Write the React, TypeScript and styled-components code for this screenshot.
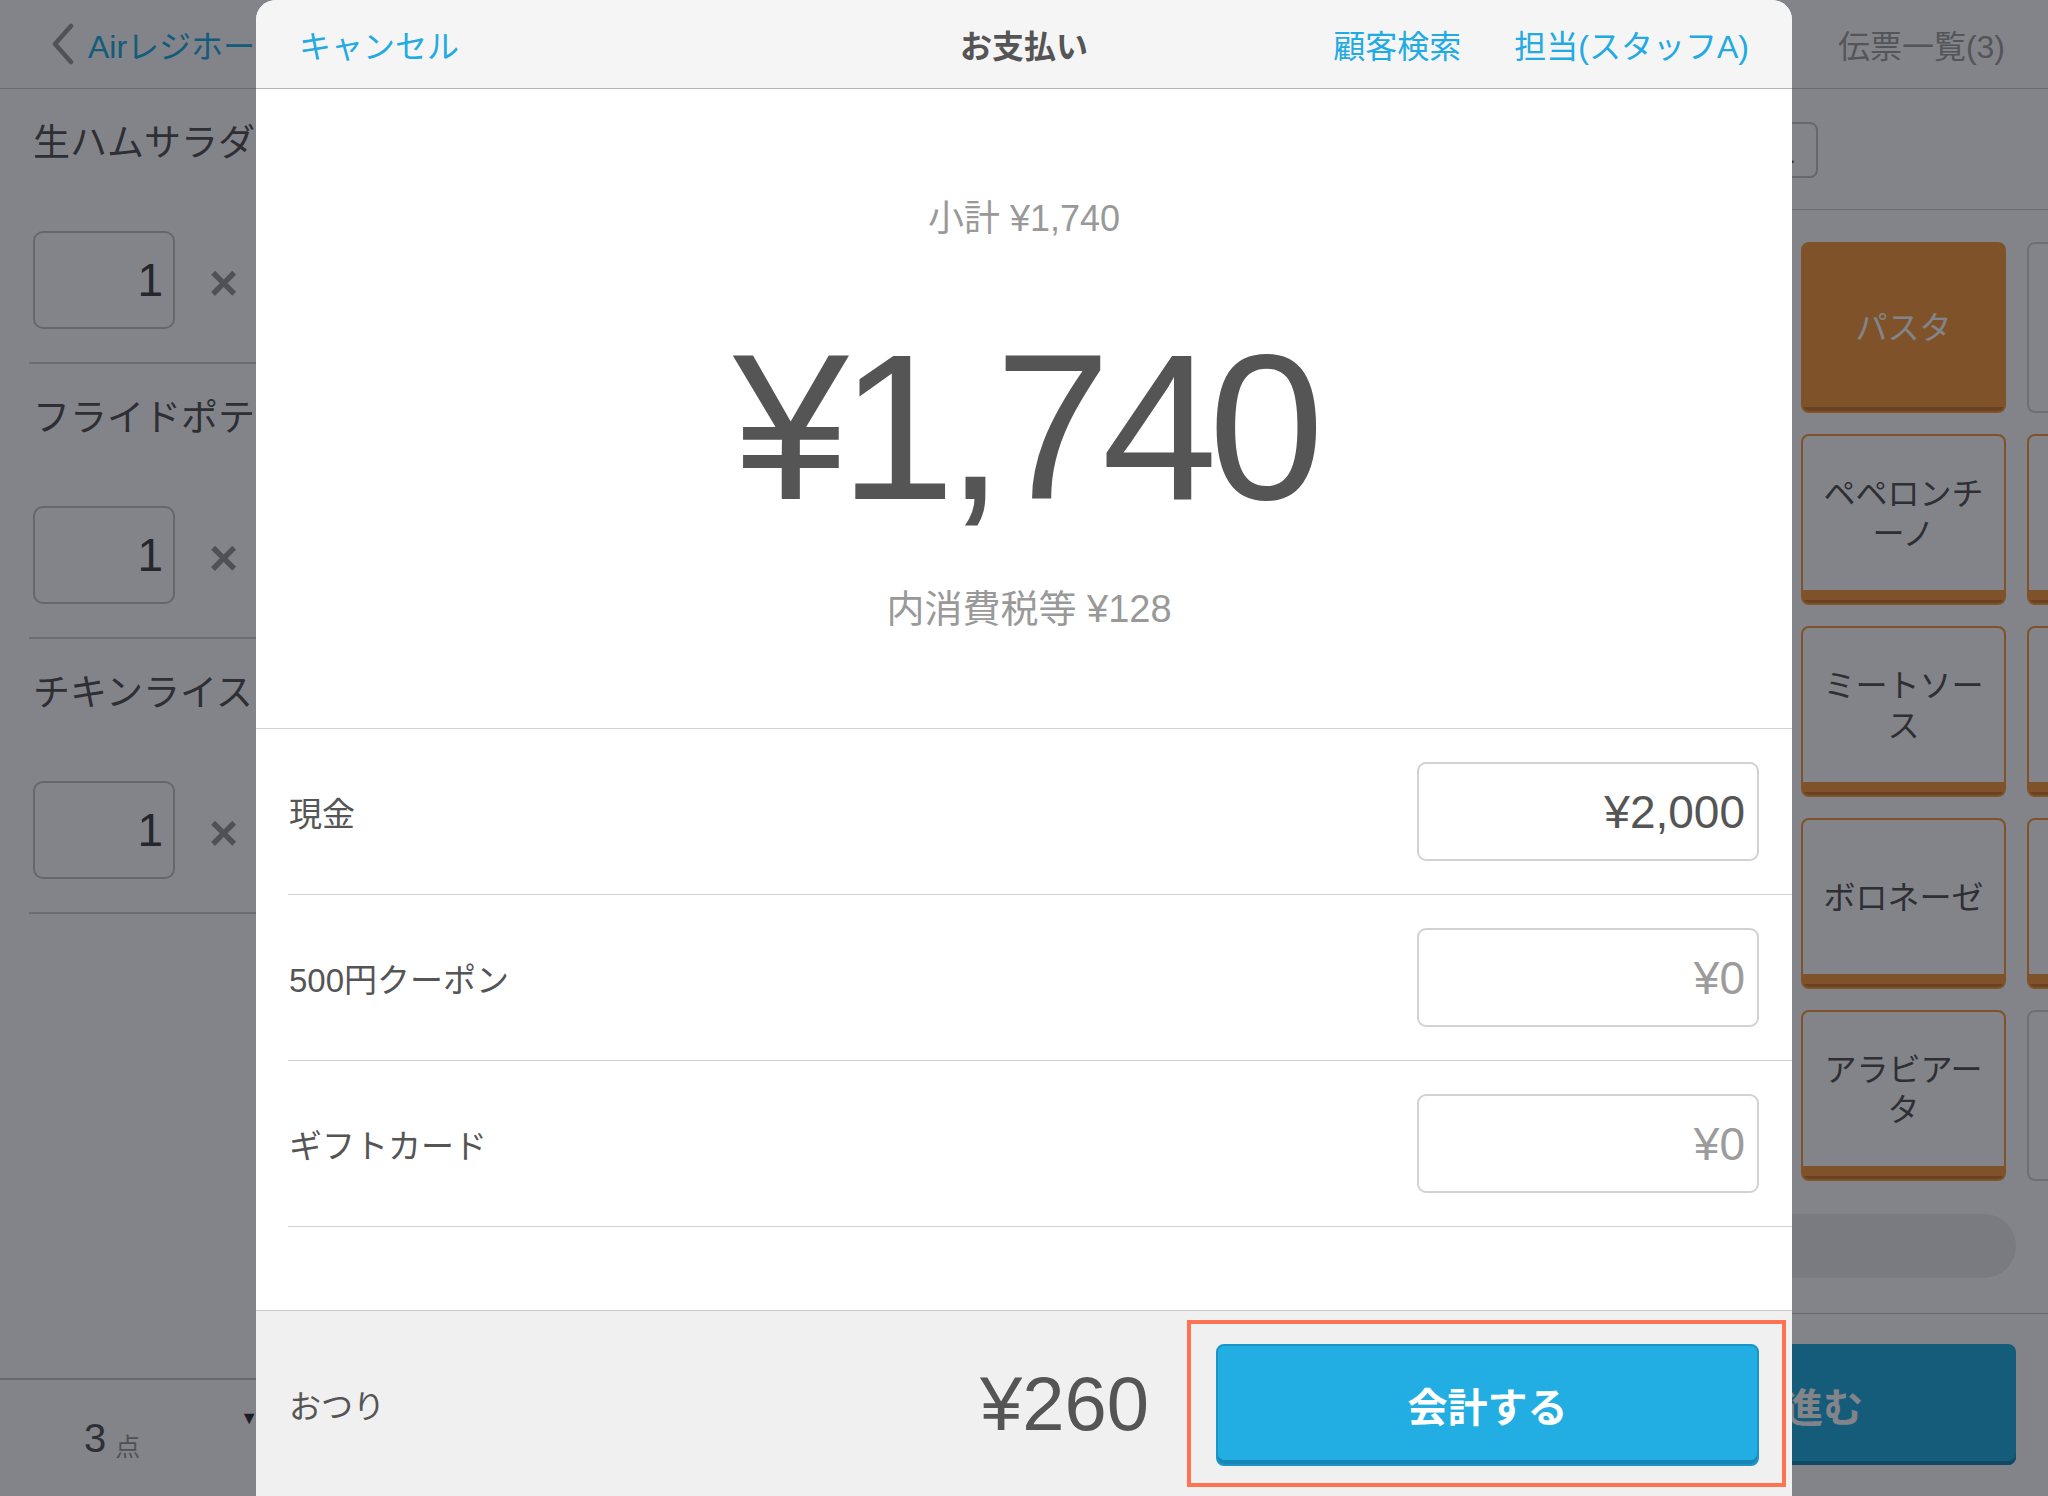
import React from "react";
import styled, { createGlobalStyle } from "styled-components";

const GlobalStyle = createGlobalStyle`
  html, body { margin: 0; padding: 0; }
  body {
    font-family: "Liberation Sans", "Noto Sans CJK JP", sans-serif;
    background: #fff;
  }
  *, *::before, *::after { box-sizing: border-box; }
`;

const BLUE = "#22aee2";
const ORANGE = "#f79b3f";

/* ---------- screen ---------- */
const Screen = styled.div`
  position: relative;
  width: 2048px;
  height: 1496px;
  overflow: hidden;
  background: #fff;
  display: flex;
  flex-direction: column;
`;

/* ---------- background app (behind the sheet) ---------- */
const AppHeader = styled.header`
  height: 89px;
  flex: none;
  display: flex;
  align-items: center;
  justify-content: space-between;
  padding: 0 43px 0 50px;
  border-bottom: 1px solid #c8c8c8;
`;

const BackLink = styled.div`
  display: flex;
  align-items: center;
  gap: 12px;
  color: ${BLUE};
  font-size: 32px;
`;

const SlipLink = styled.div`
  color: #a0a0a0;
  font-size: 32px;
`;

const AppBody = styled.div`
  flex: 1;
  display: flex;
  min-height: 0;
`;

const OrderPanel = styled.section`
  width: 880px;
  flex: none;
  display: flex;
  flex-direction: column;
  border-right: 1px solid #ccc;
`;

const OrderList = styled.div`
  flex: 1;
  padding-left: 29px;
`;

const OrderItem = styled.div`
  padding: 35px 0 33px 4px;
  border-bottom: 2px solid #d0d0d0;
`;

const ItemName = styled.div`
  font-size: 37px;
  line-height: 40px;
  color: #555;
  white-space: nowrap;
`;

const QtyRow = styled.div`
  margin-top: 67px;
  display: flex;
  align-items: center;
  gap: 34px;
`;

const QtyBox = styled.div`
  width: 142px;
  height: 98px;
  border: 2px solid #c4c4c4;
  border-radius: 10px;
  display: flex;
  align-items: center;
  justify-content: flex-end;
  padding-right: 10px;
  font-size: 46px;
  color: #444;
`;

const Times = styled.span`
  font-size: 50px;
  font-weight: 700;
  line-height: 1;
  color: #999;
  padding-top: 6px;
`;

const OrderFooter = styled.div`
  height: 118px;
  flex: none;
  border-top: 2px solid #c8c8c8;
  display: flex;
  align-items: center;
  padding-left: 84px;
`;

const CountNum = styled.span`
  font-size: 40px;
  color: #555;
`;

const CountUnit = styled.span`
  font-size: 25px;
  color: #999;
  margin-left: 9px;
  align-self: center;
  padding-top: 14px;
`;

const Caret = styled.span`
  font-size: 18px;
  color: #333;
  margin-left: 100px;
  margin-top: -40px;
`;

const MenuPanel = styled.section`
  flex: 1;
  min-width: 0;
  display: flex;
  flex-direction: column;
`;

const MenuToolbar = styled.div`
  height: 121px;
  flex: none;
  border-bottom: 1px solid #ccc;
  display: flex;
  justify-content: flex-end;
  align-items: flex-start;
  padding: 33px 230px 0 0;
`;

const ToolButton = styled.div`
  height: 56px;
  padding: 0 20px;
  border: 2px solid #c4c4c4;
  border-radius: 8px;
  display: flex;
  align-items: center;
  font-size: 26px;
  color: #555;
`;

const MenuGrid = styled.div`
  flex: none;
  display: grid;
  grid-template-columns: repeat(6, 205px);
  grid-auto-rows: 171px;
  gap: 21px;
  padding: 32px 0 0 17px;
`;

type TileKind = "category" | "active" | "item" | "empty";

const Tile = styled.div<{ $kind: TileKind }>`
  border-radius: 8px;
  display: flex;
  align-items: center;
  justify-content: center;
  text-align: center;
  font-size: 32px;
  line-height: 40px;
  line-break: anywhere;
  padding: 0 16px;
  color: ${(p) => (p.$kind === "active" ? "#fff" : "#555")};
  border: 2px solid
    ${(p) =>
      p.$kind === "item" ? ORANGE : p.$kind === "active" ? ORANGE : "#d4d4d4"};
  background: ${(p) =>
    p.$kind === "item"
      ? `linear-gradient(to top, #c97a30 0 3px, ${ORANGE} 3px 13px, #fff 13px)`
      : p.$kind === "active"
      ? `linear-gradient(to top, #c97a30 0 4px, ${ORANGE} 4px)`
      : "#fff"};
  padding-bottom: ${(p) => (p.$kind === "item" ? "12px" : "0")};
`;

const Pill = styled.div`
  flex: none;
  height: 64px;
  margin: 33px 32px 0 17px;
  border-radius: 32px;
  background: #ececec;
`;

const MenuFooter = styled.div`
  margin-top: auto;
  height: 183px;
  flex: none;
  border-top: 1px solid #c8c8c8;
  display: flex;
  gap: 24px;
  padding: 30px 32px 0 17px;
`;

const HoldButton = styled.div`
  flex: 1;
  height: 121px;
  border: 2px solid #ccc;
  border-radius: 8px;
  display: flex;
  align-items: center;
  justify-content: center;
  font-size: 36px;
  color: #555;
`;

const NextButton = styled.div`
  width: 506px;
  flex: none;
  height: 121px;
  border-radius: 8px;
  background: ${BLUE};
  box-shadow: inset 0 -4px 0 #1a86b6;
  display: flex;
  align-items: center;
  justify-content: center;
  color: #fff;
  font-size: 40px;
  font-weight: 700;
`;

/* ---------- sheet ---------- */
const Backdrop = styled.div`
  position: absolute;
  inset: 0;
  background: rgba(7, 9, 19, 0.5);
`;

const Sheet = styled.div`
  position: absolute;
  top: 0;
  left: 256px;
  width: 1536px;
  height: 1496px;
  background: #fff;
  border-radius: 20px 20px 0 0;
  overflow: hidden;
  display: flex;
  flex-direction: column;
`;

const SheetHeader = styled.div`
  height: 89px;
  flex: none;
  background: #f5f5f5;
  border-bottom: 1px solid #b4b4b4;
  display: grid;
  grid-template-columns: 1fr auto 1fr;
  align-items: center;
  padding: 0 43px;
`;

const HeaderLink = styled.span`
  color: #22aae2;
  font-size: 32px;
`;

const SheetTitle = styled.span`
  color: #555;
  font-size: 32px;
  font-weight: 700;
`;

const HeaderActions = styled.div`
  justify-self: end;
  display: flex;
  gap: 53px;
`;

const Summary = styled.div`
  height: 640px;
  flex: none;
  border-bottom: 1px solid #d2d2d2;
  display: flex;
  flex-direction: column;
  align-items: center;
  padding-top: 108px;
`;

const Subtotal = styled.div`
  font-size: 36px;
  line-height: 44px;
  color: #999;
`;

const Total = styled.div`
  margin-top: 82px;
  font-size: 208px;
  line-height: 208px;
  letter-spacing: -9px;
  color: #555;
`;

const Tax = styled.div`
  margin-top: 55px;
  padding-left: 10px;
  font-size: 38px;
  line-height: 46px;
  color: #999;
`;

const PaymentRow = styled.div`
  height: 166px;
  flex: none;
  margin-left: 32px;
  padding-right: 33px;
  border-bottom: 1px solid #d2d2d2;
  display: flex;
  align-items: center;
  justify-content: space-between;
`;

const RowLabel = styled.span`
  font-size: 33px;
  color: #555;
  padding-left: 1px;
`;

const AmountField = styled.div<{ $filled: boolean }>`
  width: 342px;
  height: 99px;
  border: 2px solid #d2d2d2;
  border-radius: 9px;
  display: flex;
  align-items: center;
  justify-content: flex-end;
  padding: 0 12px;
  font-size: 46px;
  color: ${(p) => (p.$filled ? "#555" : "#9c9c9c")};
`;

const Spacer = styled.div`
  flex: 1;
`;

const SheetFooter = styled.div`
  height: 186px;
  flex: none;
  background: #f0f0f0;
  border-top: 1px solid #cbcbcb;
  display: flex;
  align-items: center;
  padding: 0 6px 0 33px;
`;

const ChangeLabel = styled.span`
  flex: 1;
  font-size: 32px;
  color: #555;
`;

const ChangeAmount = styled.span`
  font-size: 76px;
  line-height: 1;
  color: #555;
  margin-right: 38px;
`;

const HighlightFrame = styled.div`
  border: 4px solid #ff7350;
  padding: 20px 23px 17px 25px;
`;

const CheckoutButton = styled.button`
  width: 543px;
  height: 122px;
  border: 2px solid #1b95c8;
  border-radius: 8px;
  background: ${BLUE};
  box-shadow: inset 0 -4px 0 #1a86b6;
  color: #fff;
  font-family: inherit;
  font-size: 40px;
  font-weight: 700;
  display: flex;
  align-items: center;
  justify-content: center;
  padding: 0;
`;

const ChevronLeft = () => (
  <svg width="26" height="42" viewBox="0 0 26 42">
    <polyline
      points="21,3 5,21 21,39"
      fill="none"
      stroke="#9a9a9a"
      strokeWidth="4.5"
      strokeLinecap="round"
      strokeLinejoin="round"
    />
  </svg>
);

const orders = ["生ハムサラダ", "フライドポテト", "チキンライス"];

const categories = ["サラダ", "前菜", "ピザ", "ドリンク", "パスタ", "デザート"];
const menuRows: (string | null)[][] = [
  ["シーザーサラダ", "カプレーゼ", "マルゲリータ", "コーラ", "ペペロンチーノ", "ティラミス"],
  ["生ハムサラダ", "アヒージョ", "クアトロ", "ジンジャー", "ミートソース", "パンナコッタ"],
  ["グリーンサラダ", "フライドポテト", "マリナーラ", "オレンジ", "ボロネーゼ", "ジェラート"],
  ["コブサラダ", "チキンライス", "ビスマルク", "ウーロン茶", "アラビアータ", null],
];

const payments = [
  { label: "現金", value: "¥2,000", filled: true },
  { label: "500円クーポン", value: "¥0", filled: false },
  { label: "ギフトカード", value: "¥0", filled: false },
];

export default function App() {
  return (
    <>
      <GlobalStyle />
      <Screen>
        <AppHeader>
          <BackLink>
            <ChevronLeft />
            Airレジホーム
          </BackLink>
          <SlipLink>伝票一覧(3)</SlipLink>
        </AppHeader>
        <AppBody>
          <OrderPanel>
            <OrderList>
              {orders.map((name) => (
                <OrderItem key={name}>
                  <ItemName>{name}</ItemName>
                  <QtyRow>
                    <QtyBox>1</QtyBox>
                    <Times>×</Times>
                  </QtyRow>
                </OrderItem>
              ))}
            </OrderList>
            <OrderFooter>
              <CountNum>3</CountNum>
              <CountUnit>点</CountUnit>
              <Caret>▼</Caret>
            </OrderFooter>
          </OrderPanel>
          <MenuPanel>
            <MenuToolbar>
              <ToolButton>並び替え</ToolButton>
            </MenuToolbar>
            <MenuGrid>
              {categories.map((c) => (
                <Tile key={c} $kind={c === "パスタ" ? "active" : "category"}>
                  {c}
                </Tile>
              ))}
              {menuRows.flat().map((m, i) =>
                m ? (
                  <Tile key={i} $kind="item">
                    {m}
                  </Tile>
                ) : (
                  <Tile key={i} $kind="empty" />
                )
              )}
            </MenuGrid>
            <Pill />
            <MenuFooter>
              <HoldButton>保留</HoldButton>
              <NextButton>会計へ進む</NextButton>
            </MenuFooter>
          </MenuPanel>
        </AppBody>

        <Backdrop />

        <Sheet>
          <SheetHeader>
            <HeaderLink>キャンセル</HeaderLink>
            <SheetTitle>お支払い</SheetTitle>
            <HeaderActions>
              <HeaderLink>顧客検索</HeaderLink>
              <HeaderLink>担当(スタッフA)</HeaderLink>
            </HeaderActions>
          </SheetHeader>
          <Summary>
            <Subtotal>小計 ¥1,740</Subtotal>
            <Total>¥1,740</Total>
            <Tax>内消費税等 ¥128</Tax>
          </Summary>
          {payments.map((p) => (
            <PaymentRow key={p.label}>
              <RowLabel>{p.label}</RowLabel>
              <AmountField $filled={p.filled}>{p.value}</AmountField>
            </PaymentRow>
          ))}
          <Spacer />
          <SheetFooter>
            <ChangeLabel>おつり</ChangeLabel>
            <ChangeAmount>¥260</ChangeAmount>
            <HighlightFrame>
              <CheckoutButton>会計する</CheckoutButton>
            </HighlightFrame>
          </SheetFooter>
        </Sheet>
      </Screen>
    </>
  );
}
